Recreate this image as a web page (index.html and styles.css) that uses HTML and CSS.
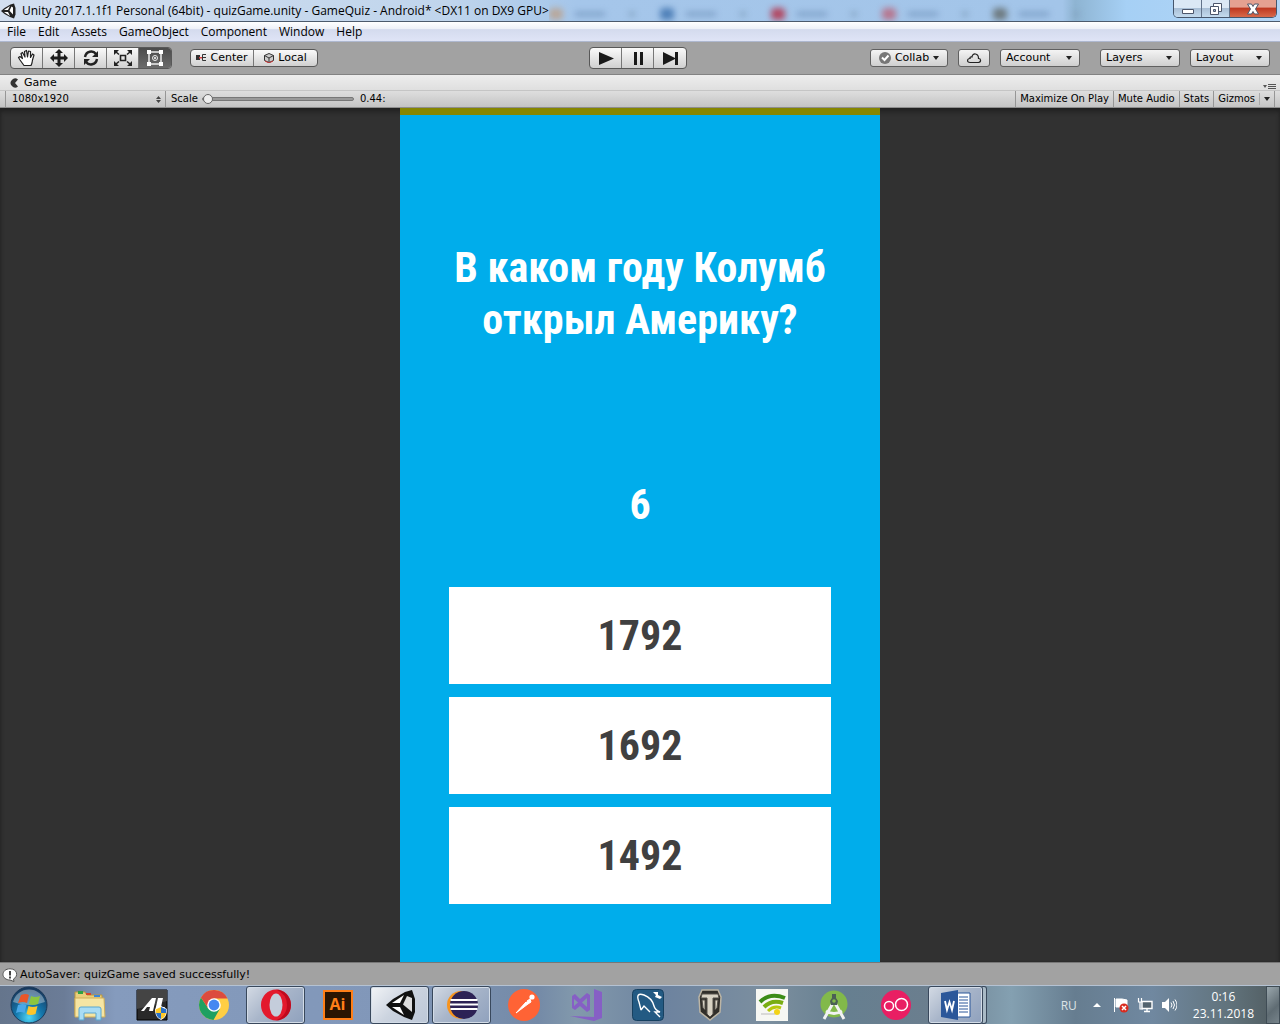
FILE: index.html
```
<!DOCTYPE html>
<html lang="ru">
<head>
<meta charset="utf-8">
<meta name="viewport" content="width=device-width, initial-scale=1">
<title>Unity - GameQuiz</title>
<link rel="stylesheet" href="styles.css">
</head>
<body>
<header class="titlebar">
  <svg class="app-icon" viewBox="0 0 32 32" aria-hidden="true"><path fill="#222" d="M2 16 9 10 21 3 28 1 31 10V23L28 31 20 28 9 22Z"/><path fill="#fff" d="M8 14 20 6 16 14ZM8 18H16L20 26ZM23 7 26 9V23L19 15.500Z"/></svg>
  <h1 class="window-title">Unity 2017.1.1f1 Personal (64bit) - quizGame.unity - GameQuiz - Android* &lt;DX11 on DX9 GPU&gt;</h1>
  <div class="glass" aria-hidden="true">
    <i class="ghost tan"></i><i class="ghost blue"></i><i class="ghost red"></i><i class="ghost rose"></i><i class="ghost dark"></i>
  </div>
  <div class="window-buttons">
    <button class="win" aria-label="Minimize"><svg viewBox="0 0 14 12"><path d="M1.500 6.500h11v4h-11z" fill="#fff" stroke="#4c566b"/></svg></button>
    <button class="win" aria-label="Restore"><svg viewBox="0 0 14 12"><path d="M4.500.5h8v8h-8z" fill="#fff" stroke="#4c566b"/><path d="M1.500 3.500h8v8h-8z" fill="#fff" stroke="#4c566b"/><path d="M4.500 6.500h2v2h-2z" fill="#9cb5cf" stroke="#4c566b"/></svg></button>
    <button class="win close" aria-label="Close"><svg viewBox="0 0 14 12"><path d="M1.500 1h4L7 3.500 8.500 1h4L9.500 6l3 5h-4L7 8.500 5.500 11h-4l3-5z" fill="#fff" stroke="#4c566b"/></svg></button>
  </div>
</header>

<nav class="menubar">
  <a href="#">File</a><a href="#">Edit</a><a href="#">Assets</a><a href="#">GameObject</a><a href="#">Component</a><a href="#">Window</a><a href="#">Help</a>
</nav>

<div class="toolbar">
  <div class="tools">
    <div class="group tall">
      <button aria-label="Hand"><svg viewBox="0 0 20 18"><path d="M7 16.500 3 11 1.500 8.500 3 7.500 5.500 9.500 4 4.500 5.500 3.500 8 8 7.500 2.500 9.500 1.500 10.500 8 11.500 2 13.500 2.500 13.500 8.500 15.500 5 17 6 15.500 11 15 14 14 16.500Z" fill="#fff" stroke="#222" stroke-linejoin="round" stroke-width="1.200"/></svg></button>
      <button aria-label="Move"><svg viewBox="0 0 20 18"><path d="M10 0 14 4H11.500V7.500H15V5L19 9 15 13V10.500H11.500V14H14L10 18 6 14H8.500V10.500H5V13L1 9 5 5V7.500H8.500V4H6Z" fill="#1c1c1c"/></svg></button>
      <button aria-label="Rotate"><svg viewBox="0 0 20 18"><path d="M4 8C5 2 12 1 15 5M16 10C15 16 8 17 5 13" fill="none" stroke="#222" stroke-width="2.400"/><path d="M17 2V8H11ZM3 16V10H9Z" fill="#222"/></svg></button>
      <button aria-label="Scale"><svg viewBox="0 0 20 18"><path d="M7.500 6.500h5v5h-5zM3 3l3 2.500M17 3l-3 2.500M3 15l3-2.500M17 15l-3-2.500" fill="none" stroke="#222" stroke-width="1.600"/><path d="M1 1h5L1 6zM19 1h-5l5 5zM1 17h5l-5-5zM19 17h-5l5-5z" fill="#222"/></svg></button>
      <button class="active" aria-label="Rect"><svg viewBox="0 0 20 18"><path d="M4 3h12v12H4z" fill="none" stroke="#eee" stroke-width="1.500"/><path d="M2 1h4v4H2zM14 1h4v4h-4zM2 13h4v4H2zM14 13h4v4h-4z" fill="#fff"/><circle cx="10" cy="9" r="2.500" fill="none" stroke="#eee"/><circle cx="10" cy="9" r="1" fill="#fff"/></svg></button>
    </div>
    <div class="group pivot">
      <button><svg class="mini" viewBox="0 0 10 10"><path d="M0 2h4v5H0z" fill="#333"/><path d="M3 4h3v1.500H3z" fill="#d44"/><path d="M10 1.500H6.500v6H10M7 4.500h3" fill="none" stroke="#333"/></svg>Center</button>
      <button><svg class="mini" viewBox="0 0 10 10"><path d="M5 .5 9.500 2.500v5L5 9.500.5 7.500v-5z" fill="#ccc" stroke="#333"/><path d="M.5 2.500 5 5l4.500-2.500M5 5v4" fill="none" stroke="#333"/><path d="M1 8l4 2 4-2" fill="none" stroke="#c33"/></svg>Local</button>
    </div>
  </div>
  <div class="group tall playback">
    <button aria-label="Play"><svg viewBox="0 0 20 18"><path d="M3 3 18 9.500 3 16z" fill="#1a1a1a"/></svg></button>
    <button aria-label="Pause"><svg viewBox="0 0 20 18"><path d="M6 3h3v13H6zM12 3h3v13h-3z" fill="#1a1a1a"/></svg></button>
    <button aria-label="Step"><svg viewBox="0 0 20 18"><path d="M3 3 15 9V3h3v13h-3V10L3 16z" fill="#1a1a1a"/></svg></button>
  </div>
  <div class="services">
    <button class="pill collab"><svg class="check" viewBox="0 0 12 12"><circle cx="6" cy="6" r="6" fill="#777"/><path d="M3 5.500 5.500 8 9.500 3.500" fill="none" stroke="#fff" stroke-width="2"/></svg>Collab<svg class="arrow" viewBox="0 0 6 4"><path d="M0 0h6L3 4z"/></svg></button>
    <button class="pill cloud" aria-label="Cloud"><svg viewBox="0 0 16 12"><path d="M4 10.500H12.500C15.500 10 15 6.500 12.500 6.500 12.500 1 6.500.5 6 5 4.500 4.500 3.500 5.500 4 6.500 1 6.500.5 10.500 4 10.500Z" fill="none" stroke="#222" stroke-width="1.200"/></svg></button>
    <label class="pill drop"><select aria-label="Account"><option>Account</option></select><svg class="arrow" viewBox="0 0 6 4"><path d="M0 0h6L3 4z"/></svg></label>
    <label class="pill drop spaced"><select aria-label="Layers"><option>Layers</option></select><svg class="arrow" viewBox="0 0 6 4"><path d="M0 0h6L3 4z"/></svg></label>
    <label class="pill drop"><select aria-label="Layout"><option>Layout</option></select><svg class="arrow" viewBox="0 0 6 4"><path d="M0 0h6L3 4z"/></svg></label>
  </div>
</div>

<div class="tabs">
  <svg class="tab-icon" viewBox="0 0 10 10"><path d="M8 1.500A4.500 4.500 0 1 0 8 8.500L5 5Z" fill="#333"/></svg>
  <span class="tab">Game</span>
  <svg class="tab-menu" viewBox="0 0 13 6"><path d="M0 1h4L2 4zM5 0h8v1H5zM5 2h8v1H5zM5 4h8v1H5z" fill="#555"/></svg>
</div>

<div class="view-options">
  <label class="resolution"><select aria-label="Resolution"><option>1080x1920</option></select><svg class="updown" viewBox="0 0 5 7"><path d="M0 3h5L2.500 0zM0 4h5L2.500 7z" fill="#444"/></svg></label>
  <label class="scale" for="scale">Scale</label>
  <input class="slider" id="scale" type="range" min="0" max="100" value="0">
  <output class="scale-value" for="scale">0.44:</output>
  <div class="toggles">
    <button>Maximize On Play</button><button>Mute Audio</button><button>Stats</button><button class="gizmos">Gizmos<i></i><svg class="arrow" viewBox="0 0 6 4"><path d="M0 0h6L3 4z"/></svg></button>
  </div>
</div>

<main class="viewport">
  <section class="game">
    <h2 class="question">В каком году Колумб открыл Америку?</h2>
    <p class="timer">6</p>
    <div class="answers">
      <button>1792</button>
      <button>1692</button>
      <button>1492</button>
    </div>
  </section>
</main>

<div class="status">
  <svg class="bubble" viewBox="0 0 16 14"><path d="M8 .8C3.500.8 1 3.500 1 6.500S4 12 8 12l4 1.500-.5-2.500C17 8 15 .8 8 .8Z" fill="#fff" stroke="#555"/><path d="M7 3h2v4.500H7zM7 8.500h2v2H7z" fill="#444"/></svg>
  <span>AutoSaver: quizGame saved successfully!</span>
</div>

<footer class="taskbar">
  <button class="start" aria-label="Start"><svg viewBox="0 0 38 38"><defs><radialGradient id="orb" cx=".5" cy=".85" r=".8"><stop offset="0" stop-color="#4fd6f5"/><stop offset=".45" stop-color="#1478ad"/><stop offset="1" stop-color="#17395f"/></radialGradient></defs><circle cx="19" cy="19" r="18" fill="url(#orb)" stroke="#1b3a59"/><path d="M3 16A16.500 16.500 0 0 1 35 16Q19 22 3 16Z" fill="#fff" opacity=".35"/><path d="M11 9q5-2 8 0l-2 8q-4-2-9 0z" fill="#e8562a"/><path d="M21 10q4 2 9 0l-2 8q-5 2-9 0z" fill="#8cc63e"/><path d="M8 19q5-2 8.500 0l-2 8q-4-2-8.500 0z" fill="#4aa8e8"/><path d="M18.500 20q4 2 9 0l-2 8q-5 2-9 0z" fill="#fbc52c"/></svg></button>
  <button class="task" aria-label="Explorer"><svg viewBox="0 0 32 32"><path d="M1 3h10l2 3h15v20H1z" fill="#e9cf7c" stroke="#b9963f"/><path d="M4 2h5v3H4z" fill="#2fa045"/><path d="M12 4h5v2h-5z" fill="#d8452d"/><path d="M20 6h6v2h-6z" fill="#3b86d8"/><path d="M1 9h29l1 19H1z" fill="#f6e5a3" stroke="#cfae58"/><path d="M5 31V20q0-2 2-2h18q2 0 2 2v11h-5v-7H10v7z" fill="#a9dcf4" stroke="#5aa7d0"/></svg></button>
  <button class="task" aria-label="AIMP"><svg viewBox="0 0 32 32"><path d="M1 1h30v30H1z" fill="#292929" stroke="#000"/><path d="M1 1h30v11L1 20z" fill="#444"/><path d="M5 22 16 9h4l-3 13h-4l1-4h-3l-3 4zM19 22 22 9h5l-2 9h4l-2 4z" fill="#fff"/><path d="M19 20l6-3 6 3q0 9-6 11-6-2-6-11z" fill="#fff"/><path d="M25 18v6h-5l-.5-3.500zM25 24h5q-1 5-5 6z" fill="#ffc928"/><path d="M25 18l5.500 2.500-.5 3.500h-5zM25 24v6q-4-1-5-6z" fill="#2a70c8"/></svg></button>
  <button class="task" aria-label="Chrome"><svg viewBox="0 0 32 32"><circle cx="16" cy="16" r="15" fill="#ffce44"/><path d="M3 8.500A15 15 0 0 0 15.500 31L22 19.500 10 19z" fill="#1fa061"/><path d="M3 8.500A15 15 0 0 1 29.500 9.500H16L10 19z" fill="#dc4b3e"/><circle cx="16" cy="16" r="6.800" fill="#fff"/><circle cx="16" cy="16" r="5.400" fill="#4688f1"/></svg></button>
  <button class="task open" aria-label="Opera"><svg viewBox="0 0 32 32"><ellipse cx="16" cy="16" rx="15" ry="15.500" fill="#e3192d"/><path d="M16 .5A15 15.500 0 0 1 16 31.500Q27 27 27 16T16 .5Z" fill="#a70014" opacity=".6"/><ellipse cx="16" cy="16" rx="6.500" ry="11.500" fill="#c4cddb"/></svg></button>
  <button class="task" aria-label="Illustrator"><span class="ai">Ai</span></button>
  <button class="task open current" aria-label="Unity"><svg viewBox="0 0 32 32"><path fill="#111" d="M2 16 9 10 21 3 28 1 31 10V23L28 31 20 28 9 22Z"/><path fill="#fff" d="M8 14 20 6 16 14ZM8 18H16L20 26Z"/><path fill="#ddd" d="M23 7 28 9V23L19 15.500Z"/></svg></button>
  <button class="task open" aria-label="Eclipse"><svg viewBox="0 0 32 32"><path d="M15 2A14 14 0 0 0 15 30L20 28V4Z" fill="#f7941e"/><circle cx="18" cy="16" r="14" fill="#2c2255"/><path d="M4.500 11h27M4 15.500h28M4.500 20h27" stroke="#fff" stroke-width="2.200"/></svg></button>
  <button class="task" aria-label="Postman"><svg viewBox="0 0 32 32"><circle cx="16" cy="16" r="16" fill="#ff6335"/><path d="M8 24 18 13l2 2zM19 12l3-2 1 3-3 2z" fill="#fff" stroke="#fff"/><circle cx="24" cy="8" r="2.600" fill="#fff"/></svg></button>
  <button class="task" aria-label="Visual Studio"><svg viewBox="0 0 32 32"><path d="M24 0 32 3V29L24 32 0 27 24 28Z" fill="#865fc5"/><path d="M2 7 5 5 10 10 17 4 20 6V21L17 23 10 17 5 21 2 19ZM4 10V17L8 13.500ZM17 9 12 13.500 17 18Z" fill="#865fc5" fill-rule="evenodd"/></svg></button>
  <button class="task" aria-label="MySQL Workbench"><svg viewBox="0 0 32 32"><rect width="31" height="31" x=".5" y=".5" rx="4" fill="#235a83" stroke="#164060"/><path d="M9 21 7 13Q3 3 12 6 20 9 22 17q1 4 6 6l-5 0 5 5M9 21l3-4 6 6" fill="none" stroke="#fff" stroke-width="1.400"/><path d="M21 3l3 3-1 2 5 2 2-2-4-2V3z" fill="#fff"/></svg></button>
  <button class="task" aria-label="World of Tanks"><svg viewBox="0 0 32 32"><path d="M8 1h16l3 7-1 15-10 8L6 23 5 8z" fill="#302e2a" stroke="#bcb5a5" stroke-width="1.500"/><path d="M8 5h16l1 4h-6v16l-3 3-3-3V9H7zM8 11h3v10l-2-2zM21 11h3l-1 8-2 2z" fill="#d8d2c4" stroke="#55504a"/></svg></button>
  <button class="task" aria-label="Wi-Fi"><svg viewBox="0 0 32 32"><path d="M0 0h32v32H0z" fill="#f6f7f3"/><path d="M4 13Q14 3 29 9" fill="none" stroke="#3b8c16" stroke-width="4"/><path d="M8 18Q16 10 27 14" fill="none" stroke="#78ad12" stroke-width="4"/><path d="M12 22Q18 16 25 19" fill="none" stroke="#b7c90e" stroke-width="3"/><circle cx="21" cy="23" r="3" fill="#f3d317"/><path d="M5 25h14" stroke="#bbb"/></svg></button>
  <button class="task" aria-label="Android Studio"><svg viewBox="0 0 32 32"><circle cx="16" cy="15" r="13.500" fill="#82b94a"/><path d="M15 14 6 30M17 14 26 30M8 22q8 5 16 0" fill="none" stroke="#f2f2f2" stroke-width="3"/><path d="M14 5h4v4l2 3-1 4h-6l-1-4 2-3z" fill="#4b5f55"/><circle cx="16" cy="12" r="1.800" fill="#82b94a"/></svg></button>
  <button class="task" aria-label="oO"><svg viewBox="0 0 32 32"><circle cx="16" cy="16" r="15" fill="#e91e63"/><circle cx="9" cy="17" r="4.500" fill="none" stroke="#fff" stroke-width="1.500"/><circle cx="21.500" cy="15.500" r="6" fill="none" stroke="#fff" stroke-width="1.500"/></svg></button>
  <button class="task open stack" aria-label="Word"><svg viewBox="0 0 32 32"><path d="M17 4h13v24H17z" fill="#fff" stroke="#2b579a"/><path d="M19 8h9M19 11h9M19 14h9M19 17h9M19 20h9M19 23h9" stroke="#2b579a"/><path d="M1 4 18 1V31L1 28Z" fill="#2b579a"/><path d="M5 12l2 9 2.500-8 2.500 8 2-9" fill="none" stroke="#fff" stroke-width="1.800"/></svg></button>
  <div class="tray">
    <span class="lang">RU</span>
    <svg class="chevron" viewBox="0 0 8 6"><path d="M0 5 4 1l4 4z" fill="#fff"/></svg>
    <svg viewBox="0 0 16 16"><path d="M1.500 1v14M3 2h6l5 1v7H3z" fill="#fff" stroke="#fff"/><circle cx="11" cy="11" r="4.500" fill="#d92b1f"/><path d="M9 9l4 4M13 9l-4 4" stroke="#fff" stroke-width="1.500"/></svg>
    <svg viewBox="0 0 16 16"><path d="M5 4.500h10v7H5zM7 14.500h6M10 12v2" fill="#53636f" stroke="#fff" stroke-width="1.400"/><path d="M1.500 1v4h3V1M3 5v7h3" fill="none" stroke="#fff" stroke-width="1.200"/></svg>
    <svg viewBox="0 0 16 16"><path d="M1 5h3l4-4v14l-4-4H1z" fill="#fff"/><path d="M10 5.500q2 2.500 0 5M12 4q3 4 0 8M14 2.500q4 5.500 0 11" fill="none" stroke="#fff"/></svg>
    <time class="clock"><span>0:16</span><span>23.11.2018</span></time>
    <button class="peek" aria-label="Show desktop"></button>
  </div>
</footer>
</body>
</html>
```

FILE: styles.css
```
* { box-sizing: border-box; }

body {
  margin: 0;
  min-height: 100vh;
  display: flex;
  flex-direction: column;
  background: #a2a2a2;
  color: #000;
  font: 11px/16px "DejaVu Sans", sans-serif;
}

button, select {
  margin: 0;
  padding: 0;
  border: 0;
  background: none;
  color: inherit;
  font: inherit;
  appearance: none;
}

h1, h2, p { margin: 0; font-size: inherit; font-weight: normal; }
svg { display: block; flex: none; }

/* Window frame */
.titlebar {
  height: 22px;
  display: flex;
  align-items: center;
  padding-right: 3px;
  border-bottom: 1px solid #4c5a6c;
  background: linear-gradient(90deg, #d3dff0 0, #c0d5ec 35%, #a5c6ea 45%, #a3c5e9 83%, #8eb4d2 84%, #a6d0f5 88%, #b4d6f6 100%);
}
.app-icon { width: 16px; height: 16px; }
.window-title {
  margin-left: 6px;
  font: 12px/20px "Open Sans", sans-serif;
  white-space: nowrap;
}
.glass {
  flex: 1;
  display: flex;
  gap: 97px;
  padding-top: 8px;
  overflow: hidden;
  align-self: stretch;
}
.ghost {
  flex: none;
  width: 14px;
  height: 12px;
  border-radius: 4px;
  filter: blur(3px);
  box-shadow: 22px 0 0 -4px #7a9cc4, 28px 0 0 -4px #7a9cc4, 34px 0 0 -4px #7a9cc4, 40px 0 0 -4px #7a9cc4, 46px 0 0 -4px #7a9cc4, 76px 0 0 -4px #809fbd;
}
.tan { background: #b8a89c; }
.blue { background: #4f80b8; }
.red { background: #b14862; }
.rose { background: #b6768f; }
.dark { background: #6d7a80; }
.window-buttons {
  display: flex;
  align-self: flex-start;
  height: 18px;
  border: 1px solid #46566c;
  border-top: 0;
  border-radius: 0 0 5px 5px;
  overflow: hidden;
}
.win {
  width: 28px;
  display: grid;
  place-items: center;
  border-right: 1px solid #62738a;
  background: linear-gradient(#dbe8f5 0 45%, #a9bfd6 50%, #c4dbee);
}
.win svg { width: 14px; height: 12px; }
.win.close {
  width: 46px;
  border: 0;
  background: linear-gradient(#e5a191 0 40%, #bf3a22 50%, #d8694a);
}

.menubar {
  height: 20px;
  display: flex;
  gap: 12px;
  padding-left: 7px;
  border-bottom: 1px solid #aeb8cf;
  background: linear-gradient(#fff, #eef1f8 35%, #d4dbee 40%, #dfe4f6);
  font: 12px/19px "Open Sans", sans-serif;
}
.menubar a { color: #000; text-decoration: none; }

/* Editor toolbar */
.toolbar {
  height: 33px;
  display: grid;
  grid-template-columns: 1fr auto 1fr;
  align-items: center;
  padding: 0 10px;
  border-bottom: 1px solid #828282;
}
.tools, .services { display: flex; align-items: center; }
.tools { gap: 18px; }
.services { justify-content: flex-end; gap: 10px; }
.group {
  display: flex;
  height: 18px;
  border: 1px solid #585858;
  border-radius: 4px;
  overflow: hidden;
  background: linear-gradient(#fafafa, #d0d0d0);
}
.group button {
  width: 32px;
  display: flex;
  align-items: center;
  justify-content: center;
  gap: 4px;
  border-right: 1px solid #777;
}
.group button:last-child { border-right: 0; }
.tall { height: 22px; }
.tall svg { width: 20px; height: 18px; }
.group .active { background: linear-gradient(#4b4b4b, #6b6b6b); }
.pivot .mini { width: 10px; height: 10px; }
.group.pivot button { width: 63px; }
.playback { margin-right: 4px; }
.pill {
  height: 18px;
  display: flex;
  align-items: center;
  border: 1px solid #606060;
  border-radius: 3px;
  background: linear-gradient(#f4f4f4, #cfcfcf);
}
.arrow { width: 6px; height: 4px; fill: #222; }
.collab { width: 78px; justify-content: center; gap: 4px; }
.check { width: 12px; height: 12px; }
.cloud { width: 32px; justify-content: center; }
.cloud svg { width: 16px; height: 12px; }
.drop { width: 80px; padding: 0 7px 0 5px; }
.drop select { flex: 1; min-width: 0; }
.spaced { margin-left: 10px; }

.tabs {
  height: 16px;
  display: flex;
  align-items: center;
  gap: 4px;
  padding: 0 4px 0 10px;
  border-bottom: 1px solid #c5c5c5;
  background: linear-gradient(#ededed, #dfdfdf);
}
.tab-icon { width: 10px; height: 10px; }
.tab-menu { width: 13px; height: 6px; margin-left: auto; align-self: flex-end; }

.view-options {
  height: 17px;
  display: flex;
  align-items: center;
  padding: 0 5px;
  border-bottom: 1px solid #8e8e8e;
  background: linear-gradient(#dedede, #c4c4c4);
  font-size: 10px;
}
.resolution {
  width: 161px;
  align-self: stretch;
  display: flex;
  align-items: center;
  padding: 0 4px 0 6px;
  border: solid #969696;
  border-width: 0 1px;
}
.resolution select { flex: 1; min-width: 0; }
.updown { width: 5px; height: 7px; }
.scale { margin-left: 5px; }
.slider {
  width: 152px;
  height: 12px;
  margin: 0 6px 0 4px;
  background: none;
  appearance: none;
}
.slider::-webkit-slider-runnable-track {
  height: 4px;
  border: 1px solid #777;
  border-radius: 2px;
  background: #999;
}
.slider::-webkit-slider-thumb {
  width: 10px;
  height: 10px;
  margin-top: -4px;
  border: 1px solid #666;
  border-radius: 50%;
  background: #eee;
  appearance: none;
}
.toggles {
  align-self: stretch;
  display: flex;
  margin-left: auto;
  border-right: 1px solid #969696;
}
.toggles button { padding: 0 4px; border-left: 1px solid #969696; }
.toggles .gizmos { display: flex; align-items: center; gap: 4px; }
.gizmos i { width: 1px; height: 12px; background: #aaa; }

/* Game view */
.viewport {
  flex: 1;
  display: flex;
  justify-content: center;
  background: #313131;
  box-shadow: inset 0 4px 4px #222, inset 0 0 2px #222;
}
.game {
  width: 480px;
  max-width: 100%;
  display: flex;
  flex-direction: column;
  padding: 127px 49px 58px;
  border-top: 7px solid #858600;
  background: #00adeb;
  font: bold 42px/52px "Roboto Condensed", "Open Sans Condensed", "Liberation Sans Narrow", "Liberation Sans", sans-serif;
  text-align: center;
}
.question, .timer { color: #fff; font-weight: bold; }
.timer { padding-top: 133px; }
.answers { display: grid; gap: 13px; margin-top: auto; }
.answers button { height: 97px; background: #fff; color: #404040; }

.status {
  height: 23px;
  display: flex;
  align-items: center;
  gap: 2px;
  padding: 2px 2px 0;
  border-top: 1px solid #777;
}
.bubble { width: 16px; height: 14px; }

/* Taskbar */
.taskbar {
  height: 39px;
  display: flex;
  gap: 3px;
  overflow: hidden;
  border-top: 1px solid #b4c2d3;
  background: linear-gradient(90deg, #65758c 0, #6b7c97 5%, #859bbd 9%, #8197b9 30%, #748aa7 42%, #8299ac 45%, #6d839f 52%, #7c8f9f 60%, #667f90 66%, #6b7e8e 73%, #84a0b1 79%, #667d90 84%, #7088a0 90%, #61737c 96%, #505b5f 100%);
}
.start { width: 57px; display: grid; place-items: center; }
.start svg { width: 38px; height: 38px; }
.task {
  width: 59px;
  flex: none;
  display: grid;
  place-items: center;
  border: 1px solid transparent;
  border-radius: 3px;
}
.task svg { width: 32px; height: 32px; }
.open {
  border-color: #39485c;
  background: linear-gradient(135deg, #d3dae4, #a9b6ca 45%, #8fa1bd);
  box-shadow: inset 0 0 0 1px #d3dce7;
}
.current { background: linear-gradient(135deg, #f2f4f7, #cbd3df 50%, #bcc7d7); }
.stack { width: 55px; box-shadow: inset 0 0 0 1px #d3dce7, 4px 0 0 -1px #a9bac6, 4px 0 0 #39485c; }
.ai {
  width: 30px;
  height: 30px;
  border: 2px solid #ff7f18;
  background: #2a1502;
  color: #ff7f18;
  font: bold 16px/24px "Open Sans", sans-serif;
}
.tray {
  margin-left: auto;
  display: flex;
  align-items: center;
  gap: 8px;
  color: #fff;
  font: 12px/17px "Open Sans", sans-serif;
}
.tray svg { width: 16px; height: 16px; }
.tray .chevron { width: 8px; height: 6px; margin: 0 4px 0 8px; }
.lang { color: #dce3e6; }
.clock {
  display: flex;
  flex-direction: column;
  margin: 0 4px 0 8px;
  text-align: center;
}
.peek {
  width: 14px;
  align-self: stretch;
  border: 1px solid #3f4c55;
  background: linear-gradient(135deg, #9aa7ad, #5f6c73 60%, #77848b);
}
```
